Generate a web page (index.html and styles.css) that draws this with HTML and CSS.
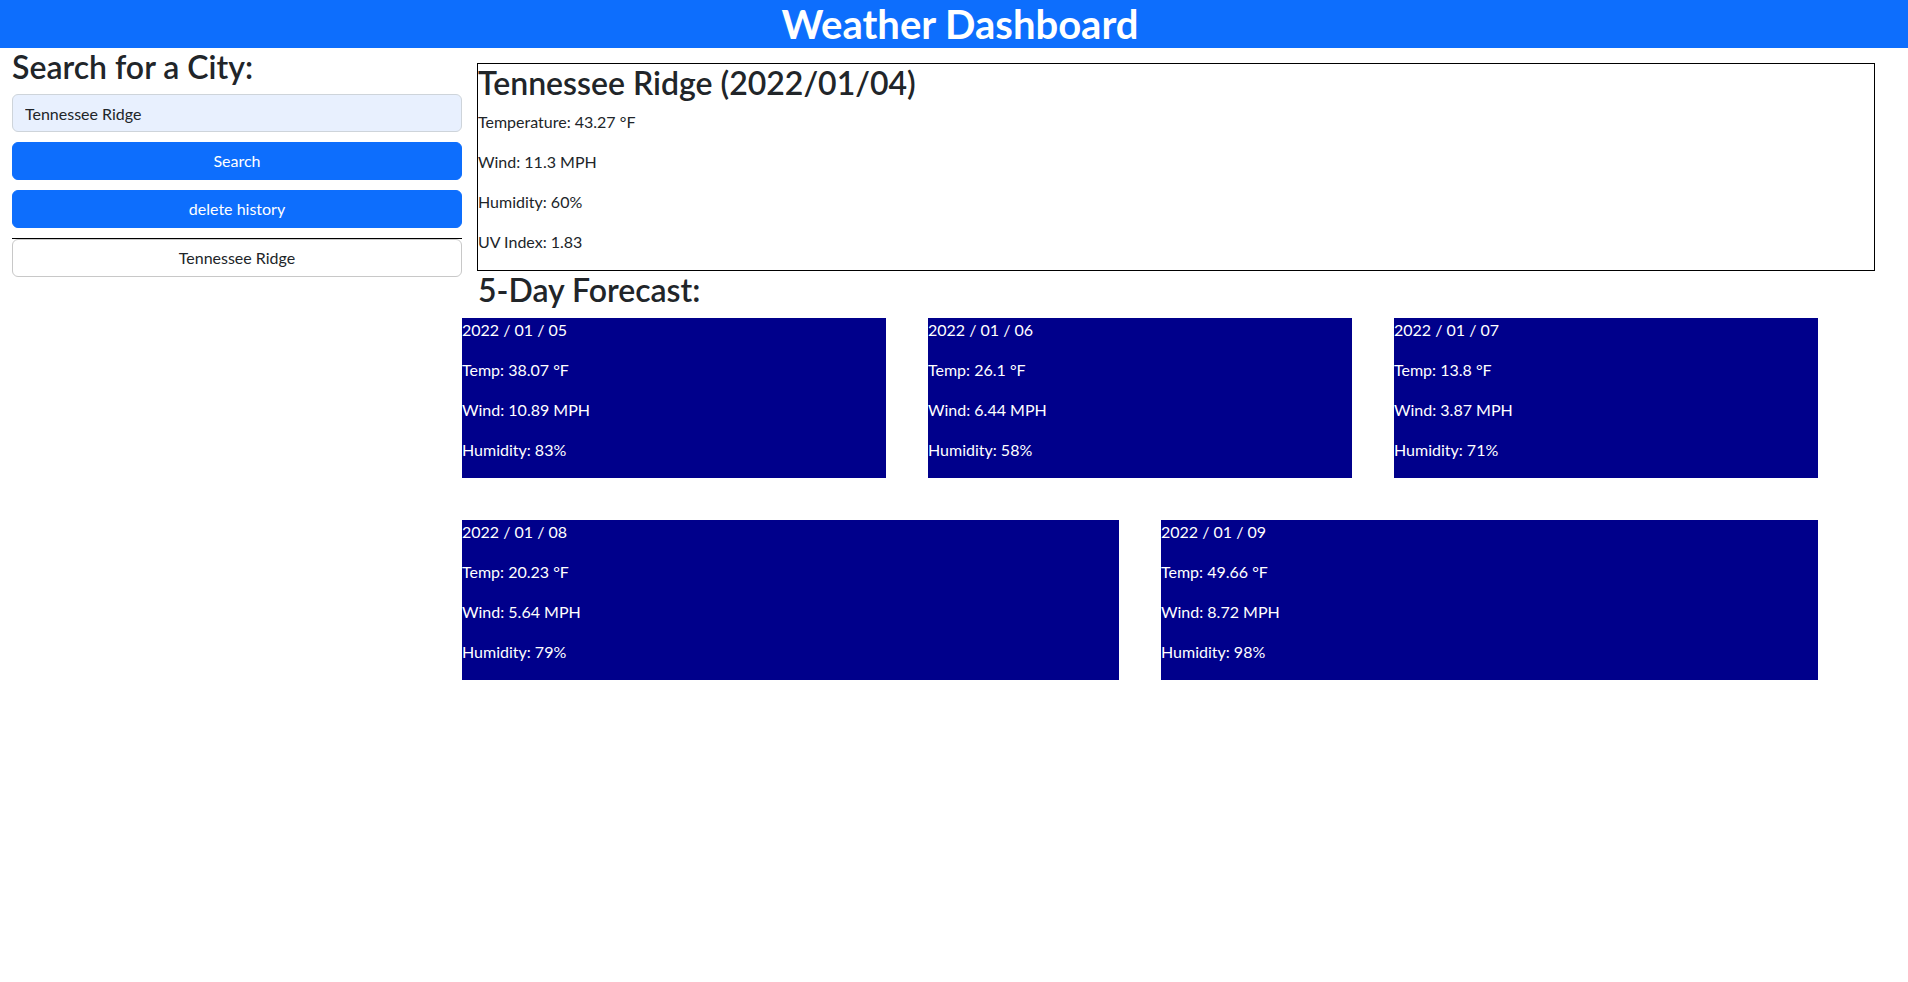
FILE: index.html
```html
<!DOCTYPE html>
<html lang="en">
<head>
<meta charset="utf-8">
<title>Weather Dashboard</title>
<link rel="stylesheet" href="styles.css">
</head>
<body>
<header class="topbar">
  <h1 class="title">Weather Dashboard</h1>
</header>
<main class="layout">
  <aside class="sidebar">
    <h2 class="heading">Search for a City:</h2>
    <input class="city-input" type="text" value="Tennessee Ridge">
    <button class="btn btn-primary">Search</button>
    <button class="btn btn-primary">delete history</button>
    <hr class="divider">
    <button class="btn btn-history">Tennessee Ridge</button>
  </aside>
  <section class="content">
    <div class="current">
      <h2 class="heading">Tennessee Ridge (2022/01/04)</h2>
      <p class="line">Temperature: 43.27 °F</p>
      <p class="line">Wind: 11.3 MPH</p>
      <p class="line">Humidity: 60%</p>
      <p class="line">UV Index: 1.83</p>
    </div>
    <h2 class="heading forecast-title">5-Day Forecast:</h2>
    <div class="forecast">
      <div class="card">
        <p class="line">2022 / 01 / 05</p>
        <p class="line">Temp: 38.07 °F</p>
        <p class="line">Wind: 10.89 MPH</p>
        <p class="line">Humidity: 83%</p>
      </div>
      <div class="card">
        <p class="line">2022 / 01 / 06</p>
        <p class="line">Temp: 26.1 °F</p>
        <p class="line">Wind: 6.44 MPH</p>
        <p class="line">Humidity: 58%</p>
      </div>
      <div class="card">
        <p class="line">2022 / 01 / 07</p>
        <p class="line">Temp: 13.8 °F</p>
        <p class="line">Wind: 3.87 MPH</p>
        <p class="line">Humidity: 71%</p>
      </div>
      <div class="card">
        <p class="line">2022 / 01 / 08</p>
        <p class="line">Temp: 20.23 °F</p>
        <p class="line">Wind: 5.64 MPH</p>
        <p class="line">Humidity: 79%</p>
      </div>
      <div class="card">
        <p class="line">2022 / 01 / 09</p>
        <p class="line">Temp: 49.66 °F</p>
        <p class="line">Wind: 8.72 MPH</p>
        <p class="line">Humidity: 98%</p>
      </div>
    </div>
  </section>
</main>
</body>
</html>
```
FILE: styles.css
```css
* { box-sizing: border-box; }
html, body { margin: 0; padding: 0; }
body {
  font-family: Lato, "Noto Sans", "DejaVu Sans", sans-serif;
  font-size: 16px;
  line-height: 1.5;
  color: #212529;
  background: #fff;
}
.topbar {
  background: #0d6efd;
  height: 48px;
  text-align: center;
}
.title {
  margin: 0;
  font-size: 40px;
  line-height: 48px;
  font-weight: 700;
  color: #fff;
  padding-left: 12px;
}
.layout {
  display: flex;
  align-items: flex-start;
}
.sidebar {
  width: 462px;
  padding-left: 12px;
  display: flex;
  flex-direction: column;
}
.heading {
  margin: 0 0 8px 0;
  font-size: 32px;
  line-height: 1.2;
  font-weight: 600;
  color: #212529;
}
.city-input {
  height: 38px;
  width: 100%;
  padding: 6px 12px;
  font: inherit;
  font-size: 16px;
  color: #212529;
  background: #e8f0fe;
  border: 1px solid #ced4da;
  border-radius: 6px;
  margin: 0 0 10px 0;
}
.btn {
  display: block;
  width: 100%;
  height: 38px;
  font: inherit;
  font-size: 16px;
  border-radius: 6px;
  padding: 6px 12px;
  text-align: center;
}
.btn-primary {
  background: #0d6efd;
  border: 1px solid #0d6efd;
  color: #fff;
  margin-bottom: 10px;
}
.divider {
  margin: 0;
  border: 0;
  border-top: 1px solid #000;
  height: 0;
}
.btn-history {
  background: #fff;
  border: 1px solid #c8c8c8;
  color: #212529;
}
.content {
  flex: 1;
}
.current {
  margin: 15px 33px 0 15px;
  border: 1px solid #000;
}
.line {
  margin: 0 0 16px 0;
  line-height: 24px;
}
.current .heading {
  margin-bottom: 8px;
}
.forecast-title {
  margin-left: 16px;
}
.forecast {
  width: 1356px;
  display: flex;
  flex-wrap: wrap;
  gap: 42px;
}
.card {
  flex: 1 1 400px;
  height: 160px;
  background: #00008b;
  color: #fff;
}
```
